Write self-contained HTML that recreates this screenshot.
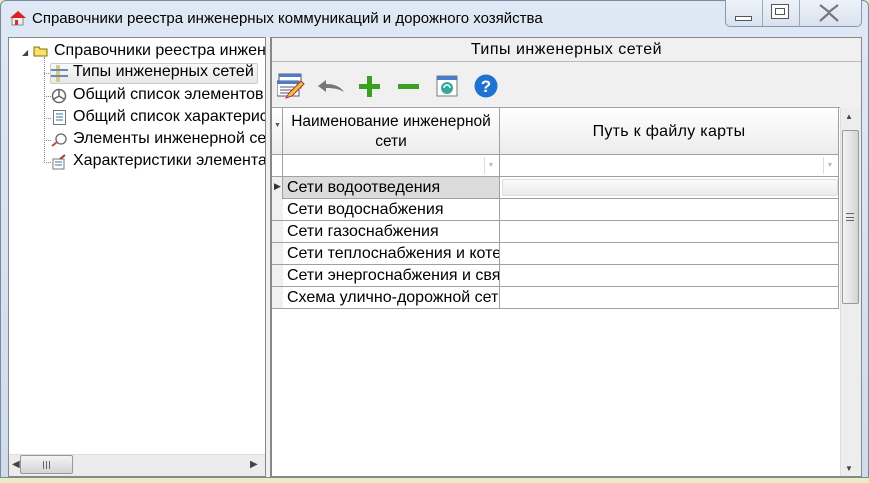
<!DOCTYPE html>
<html><head><meta charset="utf-8"><style>
*{box-sizing:border-box;margin:0;padding:0}
body{width:869px;height:483px;overflow:hidden;background:#e9edbf;font-family:"Liberation Sans",sans-serif;font-size:16px;color:#000;position:relative}
.win{position:absolute;left:0;top:0;width:869px;height:478px;background:linear-gradient(#dfe9f5,#cfdcec);border:1px solid #7a8a9c;border-radius:6px 6px 0 0}
.title{position:absolute;left:32px;top:10px;font-size:15px;color:#000}
.abs{position:absolute;white-space:nowrap}
.cell{position:absolute;border-right:1px solid #a0a0a0;border-bottom:1px solid #a0a0a0;white-space:nowrap;overflow:hidden;padding-left:4px;line-height:21px}
.clip{position:absolute;left:9px;top:38px;width:256px;height:416px;overflow:hidden}
</style></head><body>
<div class="win"></div>
<svg class="abs" style="left:9px;top:9px" width="18" height="18"><rect x="3" y="8" width="11" height="8" fill="#eee" stroke="#888"/><polygon points="1,9 9,2 17,9" fill="#d22"/><rect x="6" y="11" width="3" height="5" fill="#c33"/></svg>
<div class="title">Справочники реестра инженерных коммуникаций и дорожного хозяйства</div>
<div class="abs" style="left:725px;top:0;width:137px;height:27px;border:1px solid #8898b0;border-top:none;border-radius:0 0 5px 5px;background:linear-gradient(#eef3f9,#d8e2ee)"></div>
<div class="abs" style="left:762px;top:0;width:1px;height:26px;background:#9aa8ba"></div>
<div class="abs" style="left:799px;top:0;width:1px;height:26px;background:#9aa8ba"></div>
<div class="abs" style="left:735px;top:16px;width:17px;height:5px;border:1px solid #555;background:#fff"></div>
<div class="abs" style="left:771px;top:4px;width:18px;height:15px;border:1px solid #555;background:#fff"><div style="margin:3px;height:7px;border:1px solid #555"></div></div>
<svg class="abs" style="left:818px;top:4px" width="22" height="18"><path d="M2 1l9 7 9-7M2 17l9-8 9 8" fill="none" stroke="#777" stroke-width="2.2"/></svg>
<div class="abs" style="left:8px;top:37px;width:258px;height:440px;background:#fff;border:1px solid #888"></div>
<div class="abs" style="left:266px;top:37px;width:5px;height:440px;background:#f0f0f0;border-right:1px solid #888"></div>
<div class="clip"><div style="position:absolute;left:-9px;top:-38px;width:300px;height:460px">
<div class="abs" style="left:22px;top:48px;font-size:8px;color:#444">◢</div>
<svg class="abs" style="left:33px;top:45px" width="16" height="12"><path d="M1 2h5l1 2h7v7H1z" fill="#f6e26a" stroke="#8a6d00"/></svg>
<div class="abs" style="left:54px;top:42px">Справочники реестра инжен</div>
<div class="abs" style="left:44px;top:57px;width:1px;height:106px;border-left:1px dotted #888"></div>
<div class="abs" style="left:44px;top:73px;width:7px;border-top:1px dotted #888"></div>
<div class="abs" style="left:44px;top:96px;width:7px;border-top:1px dotted #888"></div>
<div class="abs" style="left:44px;top:118px;width:7px;border-top:1px dotted #888"></div>
<div class="abs" style="left:44px;top:140px;width:7px;border-top:1px dotted #888"></div>
<div class="abs" style="left:44px;top:162px;width:7px;border-top:1px dotted #888"></div>
<div class="abs" style="left:50px;top:63px;width:208px;height:21px;border:1px solid #ccc;border-radius:2px;background:linear-gradient(#f8f8f8,#e8e8e8)"></div>
<svg class="abs" style="left:51px;top:65px" width="17" height="17"><rect x="5" y="0" width="4" height="17" fill="#d9c98a"/><path d="M0 5h17M0 11h17" stroke="#6a8ab0" stroke-width="2"/></svg>
<div class="abs" style="left:73px;top:63px">Типы инженерных сетей</div>
<svg class="abs" style="left:51px;top:88px" width="16" height="16"><circle cx="8" cy="8" r="6.5" fill="none" stroke="#666" stroke-width="1.5"/><path d="M8 8V2M8 8l-5 3M8 8l5 3" stroke="#666" stroke-width="1.5"/></svg>
<div class="abs" style="left:73px;top:86px">Общий список элементов</div>
<svg class="abs" style="left:53px;top:110px" width="13" height="15"><rect x="0.5" y="0.5" width="12" height="14" fill="#fff" stroke="#777"/><path d="M3 4h7M3 7h7M3 10h7" stroke="#37a"/></svg>
<div class="abs" style="left:73px;top:108px">Общий список характерис</div>
<svg class="abs" style="left:51px;top:132px" width="16" height="16"><circle cx="10" cy="7" r="5" fill="none" stroke="#666" stroke-width="1.3"/><path d="M1 14l5-4" stroke="#c44" stroke-width="2"/></svg>
<div class="abs" style="left:73px;top:130px">Элементы инженерной сет</div>
<svg class="abs" style="left:51px;top:154px" width="16" height="16"><rect x="2" y="5" width="11" height="10" fill="#fff" stroke="#777"/><path d="M4 8h7M4 11h7" stroke="#37a"/><path d="M9 5l5-4" stroke="#a33" stroke-width="2"/></svg>
<div class="abs" style="left:73px;top:152px">Характеристики элемента</div>
</div></div>
<div class="abs" style="left:9px;top:454px;width:256px;height:22px;background:#ececec;border-top:1px solid #ddd"></div>
<div class="abs" style="left:12px;top:459px;font-size:10px;color:#444">◀</div>
<div class="abs" style="left:250px;top:459px;font-size:10px;color:#444">▶</div>
<div class="abs" style="left:20px;top:455px;width:53px;height:19px;border:1px solid #999;border-radius:2px;background:linear-gradient(#f4f4f4,#d4d4d4)"></div>
<div class="abs" style="left:43px;top:461px;width:7px;height:8px;border-left:1px solid #666;border-right:1px solid #666"><div style="margin-left:2px;width:1px;height:8px;background:#666"></div></div>
<div class="abs" style="left:271px;top:37px;width:591px;height:440px;background:#f0f0f0;border:1px solid #888"></div>
<div class="abs" style="left:272px;top:38px;width:589px;height:24px;border-bottom:1px solid #bbb;text-align:center;line-height:24px;letter-spacing:0.5px">Типы инженерных сетей</div>
<svg class="abs" style="left:277px;top:72px" width="30" height="28"><rect x="2" y="2" width="22" height="14" fill="#fff" stroke="#557"/><rect x="2" y="2" width="22" height="3" fill="#4a7cc8"/><rect x="0" y="9" width="22" height="15" fill="#fff" stroke="#557"/><rect x="0" y="9" width="22" height="3" fill="#4a7cc8"/><path d="M3 15h14M3 18h14M3 21h10" stroke="#557"/><path d="M9 26l3-5 12-12 3 3-12 12z" fill="#f0c040" stroke="#a33"/></svg>
<svg class="abs" style="left:317px;top:78px" width="28" height="16"><path d="M1 8l8-6v4c8 0 14 2 18 8-5-3-10-4-18-4v4z" fill="#777"/></svg>
<div class="abs" style="left:359px;top:84px;width:21px;height:5px;background:#3aa020"></div>
<div class="abs" style="left:367px;top:76px;width:5px;height:21px;background:#3aa020"></div>
<div class="abs" style="left:398px;top:84px;width:21px;height:5px;background:#3aa020"></div>
<svg class="abs" style="left:436px;top:75px" width="22" height="22"><rect x="1" y="1" width="20" height="20" fill="#fff" stroke="#777"/><rect x="1" y="1" width="20" height="4" fill="#4a7cc8"/><circle cx="11" cy="13" r="6" fill="#3a9"/><path d="M8 13a3 3 0 0 1 6 0" stroke="#fff" stroke-width="1.5" fill="none"/></svg>
<svg class="abs" style="left:474px;top:74px" width="24" height="24"><circle cx="12" cy="12" r="11.5" fill="#1f72d0"/><text x="12" y="18" font-size="17" font-weight="bold" fill="#fff" text-anchor="middle" font-family="Liberation Sans">?</text></svg>
<div class="abs" style="left:272px;top:107px;width:568px;height:369px;background:#fff;border-top:1px solid #a0a0a0"></div>
<div class="abs" style="left:272px;top:108px;width:11px;height:47px;background:linear-gradient(#fff,#ececec);border-right:1px solid #a0a0a0;border-bottom:1px solid #a0a0a0"></div>
<div class="abs" style="left:274px;top:122px;font-size:7px;color:#555">▼</div>
<div class="abs" style="left:283px;top:108px;width:217px;height:47px;background:linear-gradient(#fff,#ececec);border-right:1px solid #a0a0a0;border-bottom:1px solid #a0a0a0;text-align:center;line-height:20px;padding-top:4px;font-size:15.5px">Наименование инженерной<br>сети</div>
<div class="abs" style="left:500px;top:108px;width:339px;height:47px;background:linear-gradient(#fff,#ececec);border-right:1px solid #a0a0a0;border-bottom:1px solid #a0a0a0;text-align:center;line-height:47px;letter-spacing:0.3px">Путь к файлу карты</div>
<div class="abs" style="left:272px;top:155px;width:11px;height:22px;border-right:1px solid #a0a0a0;border-bottom:1px solid #a0a0a0"></div>
<div class="abs" style="left:283px;top:155px;width:217px;height:22px;border-right:1px solid #a0a0a0;border-bottom:1px solid #a0a0a0"><div style="position:absolute;right:2px;top:2px;width:13px;height:17px;border-left:1px solid #ddd;font-size:7px;color:#bbb;text-align:center;line-height:17px">▼</div></div>
<div class="abs" style="left:500px;top:155px;width:339px;height:22px;border-right:1px solid #a0a0a0;border-bottom:1px solid #a0a0a0"><div style="position:absolute;right:2px;top:2px;width:13px;height:17px;border-left:1px solid #ddd;font-size:7px;color:#bbb;text-align:center;line-height:17px">▼</div></div>
<div class="abs" style="left:272px;top:177px;width:11px;height:132px;background:#f0f0f0;border-right:1px solid #a0a0a0"></div>
<div class="abs" style="left:274px;top:181px;font-size:9px;color:#333">▶</div>
<div class="cell" style="left:283px;top:177px;width:217px;height:22px;background:#dcdcdc">Сети водоотведения</div>
<div class="cell" style="left:500px;top:177px;width:339px;height:22px;background:#fff"><div style="margin:2px 0 0 -2px;height:17px;border:1px solid #ddd;border-radius:2px;background:linear-gradient(#fafafa,#ececec)"></div></div>
<div class="cell" style="left:283px;top:199px;width:217px;height:22px">Сети водоснабжения</div>
<div class="cell" style="left:500px;top:199px;width:339px;height:22px"></div>
<div class="cell" style="left:283px;top:221px;width:217px;height:22px">Сети газоснабжения</div>
<div class="cell" style="left:500px;top:221px;width:339px;height:22px"></div>
<div class="cell" style="left:283px;top:243px;width:217px;height:22px">Сети теплоснабжения и котельных</div>
<div class="cell" style="left:500px;top:243px;width:339px;height:22px"></div>
<div class="cell" style="left:283px;top:265px;width:217px;height:22px">Сети энергоснабжения и связи</div>
<div class="cell" style="left:500px;top:265px;width:339px;height:22px"></div>
<div class="cell" style="left:283px;top:287px;width:217px;height:22px">Схема улично-дорожной сети</div>
<div class="cell" style="left:500px;top:287px;width:339px;height:22px"></div>
<div class="abs" style="left:272px;top:199px;width:11px;height:110px;background:repeating-linear-gradient(#f0f0f0 0 21px,#a0a0a0 21px 22px)"></div>
<div class="abs" style="left:840px;top:108px;width:21px;height:368px;background:#ededed;border-left:1px solid #ddd"></div>
<div class="abs" style="left:845px;top:112px;font-size:8px;color:#444">▲</div>
<div class="abs" style="left:845px;top:464px;font-size:8px;color:#444">▼</div>
<div class="abs" style="left:842px;top:130px;width:17px;height:174px;border:1px solid #999;border-radius:2px;background:linear-gradient(90deg,#f4f4f4,#d4d4d4)"></div>
<div class="abs" style="left:846px;top:213px;width:8px;height:8px;border-top:1px solid #666;border-bottom:1px solid #666"><div style="margin-top:3px;height:1px;background:#666"></div></div>
</body></html>
